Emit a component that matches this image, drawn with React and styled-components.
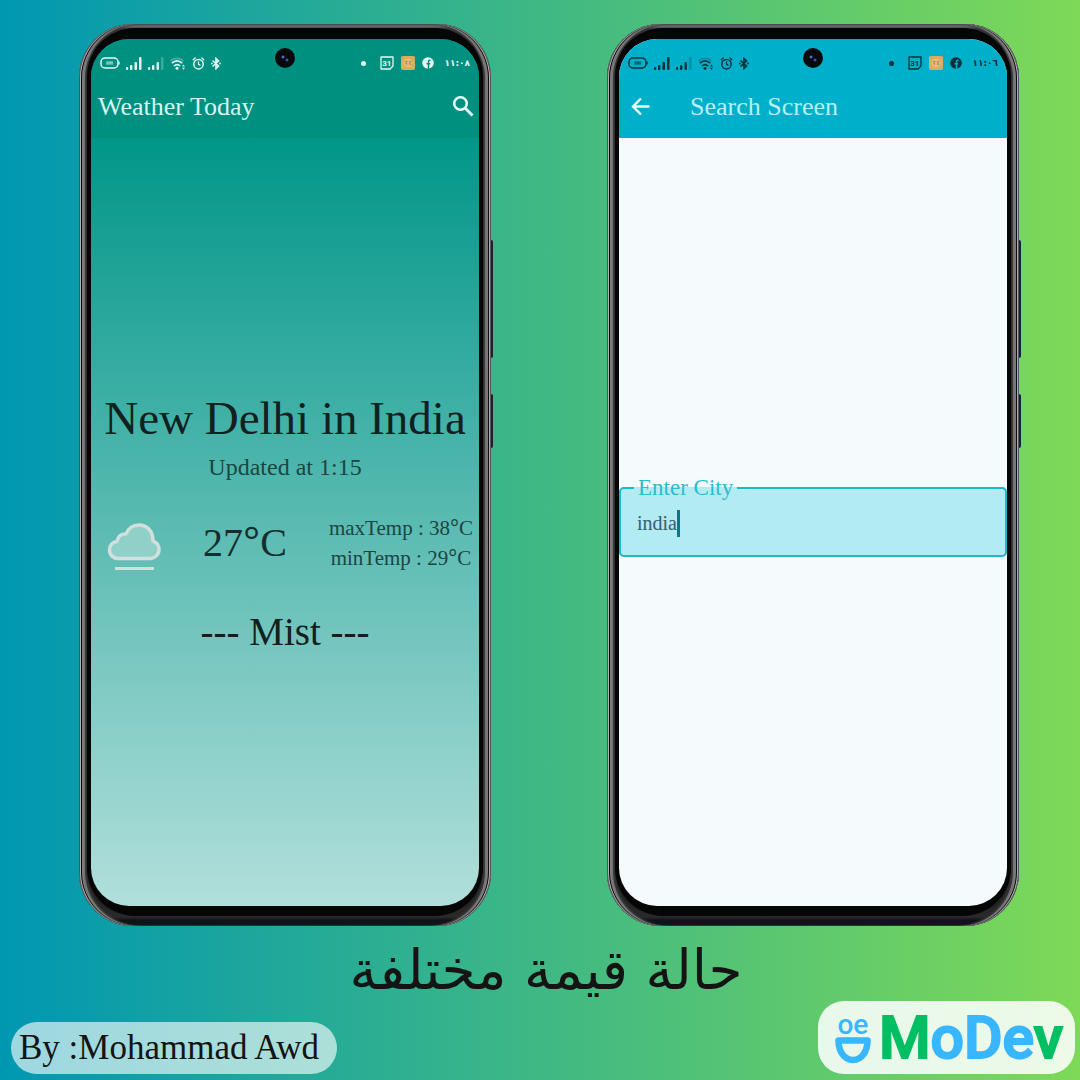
import React, { useState } from "react";
import styled, { createGlobalStyle } from "styled-components";

const GlobalStyle = createGlobalStyle`
  *, *::before, *::after { box-sizing: border-box; }
  body {
    margin: 0;
    font-family: "Liberation Serif", "Times New Roman", serif;
    color: #141414;
  }
`;

const Poster = styled.main`
  min-height: 100vh;
  display: flex;
  flex-direction: column;
  background: linear-gradient(90deg, #0097b2 0%, #7ed957 100%);
`;

const PhoneRow = styled.div`
  display: grid;
  grid-template-columns: repeat(2, minmax(0, 1fr));
  gap: 116px;
  padding: 24px 61px 0 79px;
`;

const PhoneBody = styled.section`
  position: relative;
  display: flex;
  aspect-ratio: 412 / 902;
  padding: 4px 8px 10px;
  border-radius: 54px;
  background: linear-gradient(180deg, #45494d 0, #6b7075 2px, #33363a 5px, #1c1c1c 40px, #1c1c1c calc(100% - 40px), #2a2a2a calc(100% - 9px), #10141a calc(100% - 6px), #10141a 100%);
  box-shadow:
    inset 1px 0 0 #50555a, inset -1px 0 0 #50555a,
    inset 2px 0 0 #b0b0b4, inset -2px 0 0 #b0b0b4,
    inset 3px 0 0 #0c0c0c, inset -3px 0 0 #0c0c0c,
    inset 6px 0 1px #7a7a7a, inset -6px 0 1px #7a7a7a,
    inset 9px 0 2px #333, inset -9px 0 2px #333;
`;

const SideKey = styled.span`
  position: absolute;
  left: 100%;
  top: ${(p) => p.$top};
  width: 2px;
  height: ${(p) => p.$height};
  border-radius: 0 2px 2px 0;
  background: #1d2230;
`;

const Bezel = styled.div`
  flex: 1;
  min-width: 0;
  display: flex;
  padding: 11px 4px 10px;
  border-radius: 48px;
  background: #060606;
`;

const Screen = styled.div`
  position: relative;
  flex: 1;
  min-width: 0;
  display: flex;
  flex-direction: column;
  overflow: hidden;
  border-radius: 38px;
  background: ${(p) => p.$background};
`;

const Camera = styled.span`
  position: absolute;
  top: 9px;
  left: 50%;
  width: 20px;
  height: 20px;
  margin-left: -10px;
  border-radius: 50%;
  background:
    radial-gradient(circle at 8px 9px, #8fb4f5 0, #3558b0 1px, transparent 2px),
    radial-gradient(circle at 12px 12px, #5f7fe0 0, #28408c 1px, transparent 2px),
    #07090d;
`;

const TopArea = styled.header`
  height: 99px;
  background: ${(p) => p.$background};
`;

const StatusBar = styled.div`
  display: flex;
  align-items: center;
  justify-content: space-between;
  height: 48px;
  padding: 0 9px;
  color: ${(p) => p.$color};
`;

const StatusGroup = styled.div`
  display: flex;
  align-items: center;
  gap: ${(p) => p.$gap};

  svg { display: block; }
`;

const Clock = styled.time`
  margin-left: 3px;
  font: 700 9px/16px "DejaVu Sans", sans-serif;
`;

const AppBar = styled.div`
  display: flex;
  align-items: center;
  justify-content: ${(p) => (p.$spread ? "space-between" : "flex-start")};
  gap: ${(p) => (p.$spread ? "0" : "38px")};
  height: 40px;
  padding: 0 4px 0 7px;
`;

const BarTitle = styled.h1`
  margin: 0;
  font-size: 26px;
  line-height: 32px;
  font-weight: 400;
  color: ${(p) => p.$color};
`;

const IconButton = styled.button`
  display: flex;
  padding: 0;
  border: 0;
  background: none;
  color: #e9fdfb;
  cursor: pointer;
`;

const Forecast = styled.div`
  flex: 1;
  display: flex;
  flex-direction: column;
  justify-content: center;
  padding-top: 8px;
  text-align: center;
`;

const City = styled.h2`
  margin: 0;
  font-size: 47px;
  line-height: 60px;
  font-weight: 400;
  white-space: nowrap;
  color: #12201f;
`;

const Updated = styled.p`
  margin: 0;
  font-size: 24px;
  line-height: 38px;
  color: #1c4542;
`;

const Readings = styled.div`
  display: flex;
  align-items: center;
  justify-content: space-between;
  height: 114px;
  padding: 0 6px 0 16px;

  svg {
    flex: none;
    margin-top: 8px;
  }
`;

const Temperature = styled.p`
  margin: 0;
  font-size: 40px;
  line-height: 48px;
  white-space: nowrap;
  color: #14302e;
`;

const Range = styled.div`
  font-size: 21px;
  line-height: 30px;
  white-space: nowrap;
  color: #1c4542;
`;

const Degree = styled.span`
  font-family: "Open Sans", sans-serif;
  line-height: 1;
`;

const Condition = styled.p`
  margin: 0;
  font-size: 39px;
  line-height: 64px;
  color: #12201f;
`;

const SearchBody = styled.form`
  flex: 1;
  display: flex;
  flex-direction: column;
  justify-content: center;
  padding-bottom: 12px;
`;

const Field = styled.fieldset`
  display: flex;
  min-width: 0;
  height: 82px;
  margin: 0;
  padding: 0 16px 20px;
  border: 2px solid #1bb9cd;
  border-radius: 5px;
  background: #b2ebf2;
`;

const FieldLegend = styled.legend`
  margin-left: -3px;
  padding: 0 4px;
  font-size: 23px;
  line-height: 26px;
  color: #2bbccd;
`;

const FieldLine = styled.div`
  display: flex;
  align-items: center;
  height: 44px;
`;

const FieldInput = styled.input`
  field-sizing: content;
  min-width: 4px;
  padding: 0;
  border: 0;
  outline: 0;
  background: none;
  font: 20px/28px "Liberation Serif", "Times New Roman", serif;
  color: #35606b;
  caret-color: transparent;
`;

const Caret = styled.span`
  width: 3px;
  height: 27px;
  background: #127487;
`;

const Caption = styled.p`
  margin: 0;
  padding: 14px 0 0 12px;
  font: 55px/61px "DejaVu Sans", sans-serif;
  text-align: center;
  color: #141414;
`;

const Footer = styled.footer`
  flex: 1;
  display: flex;
  align-items: flex-end;
  justify-content: space-between;
  padding: 0 5px 6px 11px;
`;

const Author = styled.p`
  margin: 0;
  padding: 0 18px 0 8px;
  border-radius: 26px;
  background: rgba(255, 255, 255, 0.62);
  font-size: 35px;
  line-height: 52px;
`;

const Brand = styled.div`
  display: flex;
  align-items: center;
  gap: 8px;
  height: 73px;
  padding: 0 12px 0 17px;
  border-radius: 26px;
  background: rgba(255, 255, 255, 0.86);
`;

const Face = styled.div`
  display: flex;
  flex-direction: column;
  align-items: center;
  padding-top: 4px;
  color: #38b6ff;
`;

const Eyes = styled.span`
  font: 500 28px/19px "Roboto", sans-serif;
  height: 22px;
`;

const Wordmark = styled.span`
  font: 500 59px/72px "Roboto", sans-serif;
  color: #38b6ff;
  -webkit-text-stroke: 2px currentColor;
  stroke-linejoin: round;
`;

const Green = styled.span`
  color: #00bf63;
`;

function Battery() {
  return (
    <svg width="20" height="12" viewBox="0 0 20 12" fill="none" stroke="currentColor">
      <rect x="1" y="1" width="17" height="10" rx="4" strokeWidth="1.500" />
      <path d="M19 4.500v3" strokeWidth="1.200" />
      <rect x="6" y="4" width="7" height="4" fill="currentColor" stroke="none" opacity=".35" />
      <path d="M7 7l1-2 1 2M10 7V5h1v2M12 5l1 2" strokeWidth=".6" opacity=".6" />
    </svg>
  );
}

function Signal({ strong }) {
  return (
    <svg width="16" height="13" viewBox="0 0 16 13" fill="currentColor">
      <rect x="0" y="10" width="2.200" height="3" rx="1" />
      <rect x="4" y="8" width="2.400" height="5" rx="1" />
      <rect x="8.500" y="5" width="2.500" height="8" rx="1" opacity={strong ? 1 : 0.9} />
      <rect x="13" y="0" width="2.500" height="13" rx="1" opacity={strong ? 1 : 0.25} />
    </svg>
  );
}

function Wifi() {
  return (
    <svg width="16" height="13" viewBox="0 0 16 13" fill="none" stroke="currentColor" strokeWidth="1.600">
      <path d="M.5 4C4 .5 10 .5 13.500 4" opacity=".3" />
      <path d="M1.800 6.200C5 3.400 9 3.400 12.200 6.200M4 9c2-1.800 4.200-1.800 6.200 0" />
      <circle cx="7" cy="11.300" r="1.500" fill="currentColor" stroke="none" />
      <path d="M12 9.500l1.500-2 1.500 2zM12 10.800l1.500 2 1.500-2z" fill="currentColor" stroke="none" />
    </svg>
  );
}

function Alarm() {
  return (
    <svg width="13" height="13" viewBox="0 0 13 13" fill="none" stroke="currentColor" strokeWidth="1.500" strokeLinecap="round">
      <circle cx="6.500" cy="7.200" r="4.700" />
      <path d="M6.500 5V7.200l1.500.9M1.200 2.800l2-1.800M11.800 2.800l-2-1.800" strokeWidth="1.300" />
    </svg>
  );
}

function Bluetooth() {
  return (
    <svg width="10" height="13" viewBox="0 0 10 13" fill="none" stroke="currentColor" strokeWidth="1.600">
      <path d="M1.500 3.500l6 5.500L5 11.500v-10L7.500 4l-6 5.500" />
      <path d="M0 6.500h1.600M8.200 6.500h1.600" />
    </svg>
  );
}

function Calendar() {
  return (
    <svg width="14" height="14" viewBox="0 0 14 14" fill="none" stroke="currentColor">
      <path d="M1 1h12v9l-3 3H1z" strokeWidth="1.300" strokeLinejoin="round" />
      <text x="6.800" y="9.700" textAnchor="middle" fontFamily="Roboto, sans-serif" fontWeight="700" fontSize="8" fill="currentColor" stroke="none">31</text>
    </svg>
  );
}

function GameBadge() {
  return (
    <svg width="14" height="14" viewBox="0 0 14 14">
      <rect width="14" height="14" rx="2" fill="#d9ad60" />
      <circle cx="7" cy="7" r="4.500" fill="#e0bd78" />
      <path d="M4 5.500h2.500M4.500 7.500h1.500M5.300 5v4M8 5.500h2.500M9 5v4M8 7.500l2.500 1" stroke="#a87f3c" strokeWidth=".7" fill="none" />
    </svg>
  );
}

function Facebook({ inner }) {
  return (
    <svg width="12" height="12" viewBox="0 0 12 12">
      <circle cx="6" cy="6" r="5.800" fill="currentColor" />
      <path d="M8.500 3.300H7.700C6.700 3.300 6.500 3.900 6.500 4.600V12M4.500 6.800h3.700" stroke={inner} strokeWidth="1.500" fill="none" />
    </svg>
  );
}

function Dot() {
  return (
    <svg width="5" height="5" viewBox="0 0 5 5"><circle cx="2.500" cy="2.500" r="2.500" fill="currentColor" /></svg>
  );
}

function SearchGlyph() {
  return (
    <svg width="24" height="26" viewBox="0 0 24 26" fill="none" stroke="currentColor" strokeWidth="2.500">
      <circle cx="9.500" cy="9.500" r="6.300" />
      <path d="M14 14l7.500 7.500" strokeWidth="2.800" />
    </svg>
  );
}

function BackGlyph() {
  return (
    <svg width="26" height="24" viewBox="0 0 26 24" fill="none" stroke="currentColor" strokeWidth="2.400">
      <path d="M23.500 11.500H7M15 3.500L7 11.500l8 8" />
    </svg>
  );
}

function MistCloud() {
  return (
    <svg width="54" height="50" viewBox="0 0 54 50" fill="none" stroke="#d3dfdd" strokeWidth="3">
      <path d="M11 36.500h32c5 0 9-4 9-9 0-4-2.500-7.500-6-8.500C46 9 40 3 32 3c-6 0-11 3.500-13 9-5-.5-8.500 3-9 7.500C5 20 2.500 23.500 2.500 28c0 5 4 8.500 8.500 8.500z" fill="#8fd0c8" strokeWidth="3.500" strokeLinejoin="round" />
      <path d="M8 46.500h39" />
    </svg>
  );
}

function Smile() {
  return (
    <svg width="36" height="27" viewBox="0 0 36 27">
      <path d="M3.500 3.500h29C32.500 14 27 23 18 23S3.500 14 3.500 3.500z" fill="none" stroke="#38b6ff" strokeWidth="6.500" strokeLinejoin="round" />
    </svg>
  );
}

function Phone({ background, barBackground, statusColor, time, dateTime, bar, children }) {
  return (
    <PhoneBody>
      <SideKey $top="24%" $height="13%" />
      <SideKey $top="41%" $height="6%" />
      <Bezel>
        <Screen $background={background}>
          <Camera />
          <TopArea $background={barBackground}>
            <StatusBar $color={statusColor}>
              <StatusGroup $gap="6px">
                <Battery />
                <Signal strong />
                <Signal />
                <Wifi />
                <Alarm />
                <Bluetooth />
              </StatusGroup>
              <StatusGroup $gap="7px">
                <Dot />
                <span />
                <Calendar />
                <GameBadge />
                <Facebook inner={barBackground} />
                <Clock dateTime={dateTime}>{time}</Clock>
              </StatusGroup>
            </StatusBar>
            {bar}
          </TopArea>
          {children}
        </Screen>
      </Bezel>
    </PhoneBody>
  );
}

function Celsius() {
  return (
    <>
      <Degree>°</Degree>C
    </>
  );
}

export default function App() {
  const [city, setCity] = useState("india");

  return (
    <>
      <GlobalStyle />
      <Poster>
        <PhoneRow>
          <Phone
            background="linear-gradient(180deg, #009688 0%, #009688 11%, #b2dfdb 100%)"
            barBackground="#009080"
            statusColor="#e4f8f5"
            time="١١:٠٨"
            dateTime="11:08"
            bar={
              <AppBar $spread>
                <BarTitle $color="#d5f7f1">Weather Today</BarTitle>
                <IconButton type="button" aria-label="Search">
                  <SearchGlyph />
                </IconButton>
              </AppBar>
            }
          >
            <Forecast>
              <City>New Delhi in India</City>
              <Updated>Updated at 1:15</Updated>
              <Readings>
                <MistCloud />
                <Temperature>27<Celsius /></Temperature>
                <Range>
                  <div>maxTemp : 38<Celsius /></div>
                  <div>minTemp : 29<Celsius /></div>
                </Range>
              </Readings>
              <Condition>--- Mist ---</Condition>
            </Forecast>
          </Phone>

          <Phone
            background="#f5fafd"
            barBackground="#00b0ca"
            statusColor="#06303a"
            time="١١:٠٦"
            dateTime="11:06"
            bar={
              <AppBar>
                <IconButton type="button" aria-label="Back">
                  <BackGlyph />
                </IconButton>
                <BarTitle $color="#b4f0f5">Search Screen</BarTitle>
              </AppBar>
            }
          >
            <SearchBody onSubmit={(e) => e.preventDefault()}>
              <Field>
                <FieldLegend>
                  <label htmlFor="city">Enter City</label>
                </FieldLegend>
                <FieldLine>
                  <FieldInput id="city" value={city} onChange={(e) => setCity(e.target.value)} />
                  <Caret />
                </FieldLine>
              </Field>
            </SearchBody>
          </Phone>
        </PhoneRow>

        <Caption lang="ar" dir="rtl">حالة قيمة مختلفة</Caption>

        <Footer>
          <Author>By :Mohammad Awd</Author>
          <Brand>
            <Face>
              <Eyes>oe</Eyes>
              <Smile />
            </Face>
            <Wordmark><Green>M</Green>oDe<Green>v</Green></Wordmark>
          </Brand>
        </Footer>
      </Poster>
    </>
  );
}
